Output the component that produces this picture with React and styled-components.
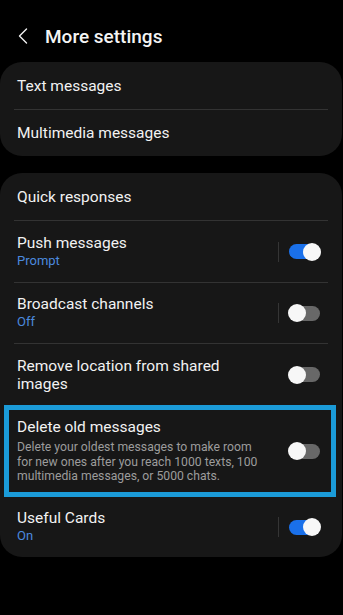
import React from "react";
import styled, { createGlobalStyle } from "styled-components";

const Global = createGlobalStyle`
  html, body { margin: 0; padding: 0; background: #000; }
  body { font-family: Roboto, "Noto Sans", "Liberation Sans", sans-serif; -webkit-font-smoothing: antialiased; }
  * { box-sizing: border-box; }
`;

const Screen = styled.div`
  width: 343px;
  height: 615px;
  background: #000;
  display: flex;
  flex-direction: column;
  overflow: hidden;
`;

const Header = styled.header`
  height: 62px;
  padding: 10px 0 0 18px;
  display: flex;
  align-items: center;
  gap: 17px;
`;

const Title = styled.h1`
  margin: 0;
  color: #f4f4f4;
  font-size: 19px;
  font-weight: 500;
  letter-spacing: 0;
`;

const Card = styled.section`
  background: #171717;
  border-radius: 22px;
  margin: 0 1px 17px 0;
  display: flex;
  flex-direction: column;
`;

const Row = styled.div`
  margin: 0 14px;
  padding: 0 8px 0 3px;
  min-height: ${(p) => p.$h || 47}px;
  display: flex;
  align-items: center;
  border-top: ${(p) => (p.$first ? "none" : "1px solid #333")};
`;

const Highlight = styled.div`
  margin: 0 6px 0 4px;
  padding: 0 11px 0 8px;
  height: 92px;
  border: 5px solid #1b9bd8;
  display: flex;
  align-items: center;
`;

const Text = styled.div`
  flex: 0 0 245px;
  width: 245px;
  display: flex;
  flex-direction: column;
`;

const Label = styled.div`
  color: #f2f2f2;
  font-size: 15.5px;
  line-height: 18px;
`;

const Sub = styled.div`
  color: #4b89de;
  font-size: 13px;
  line-height: 18px;
`;

const Desc = styled.div`
  color: #9c9c9c;
  font-size: 12.2px;
  line-height: 14.4px;
  margin-top: 4px;
`;

const Spacer = styled.div`
  flex: 1;
`;

const VDivider = styled.div`
  width: 1px;
  height: 20px;
  background: #353535;
  margin-right: 10px;
`;

const Track = styled.div`
  position: relative;
  flex: 0 0 31px;
  width: 31px;
  height: 15px;
  border-radius: 8px;
  background: ${(p) => (p.$on ? "#1a70ea" : "#686868")};
`;

const Knob = styled.div`
  position: absolute;
  top: -1.5px;
  ${(p) => (p.$on ? "right: -1px;" : "left: -1px;")}
  width: 18px;
  height: 18px;
  border-radius: 50%;
  background: #f7f7f7;
`;

const Toggle = ({ on }) => (
  <Track $on={on}>
    <Knob $on={on} />
  </Track>
);

const Chevron = () => (
  <svg width="10" height="16" viewBox="0 0 10 16" fill="none">
    <path d="M8.5 1 L1.5 8 L8.5 15" stroke="#f0f0f0" strokeWidth="1.4" strokeLinecap="round" strokeLinejoin="round" />
  </svg>
);

export default function App() {
  return (
    <Screen>
      <Global />
      <Header>
        <Chevron />
        <Title>More settings</Title>
      </Header>

      <Card>
        <Row $first>
          <Label>Text messages</Label>
        </Row>
        <Row>
          <Label>Multimedia messages</Label>
        </Row>
      </Card>

      <Card>
        <Row $first>
          <Label>Quick responses</Label>
        </Row>
        <Row $h={62}>
          <Text>
            <Label>Push messages</Label>
            <Sub>Prompt</Sub>
          </Text>
          <Spacer />
          <VDivider />
          <Toggle on />
        </Row>
        <Row $h={61}>
          <Text>
            <Label>Broadcast channels</Label>
            <Sub>Off</Sub>
          </Text>
          <Spacer />
          <VDivider />
          <Toggle />
        </Row>
        <Row $h={62}>
          <Text>
            <Label>Remove location from shared images</Label>
          </Text>
          <Spacer />
          <Toggle />
        </Row>
        <Highlight>
          <Text>
            <Label>Delete old messages</Label>
            <Desc>
              Delete your oldest messages to make room for new ones after you reach 1000 texts, 100 multimedia messages, or 5000 chats.
            </Desc>
          </Text>
          <Spacer />
          <Toggle />
        </Highlight>
        <Row $first $h={60}>
          <Text>
            <Label>Useful Cards</Label>
            <Sub>On</Sub>
          </Text>
          <Spacer />
          <VDivider />
          <Toggle on />
        </Row>
      </Card>
    </Screen>
  );
}
